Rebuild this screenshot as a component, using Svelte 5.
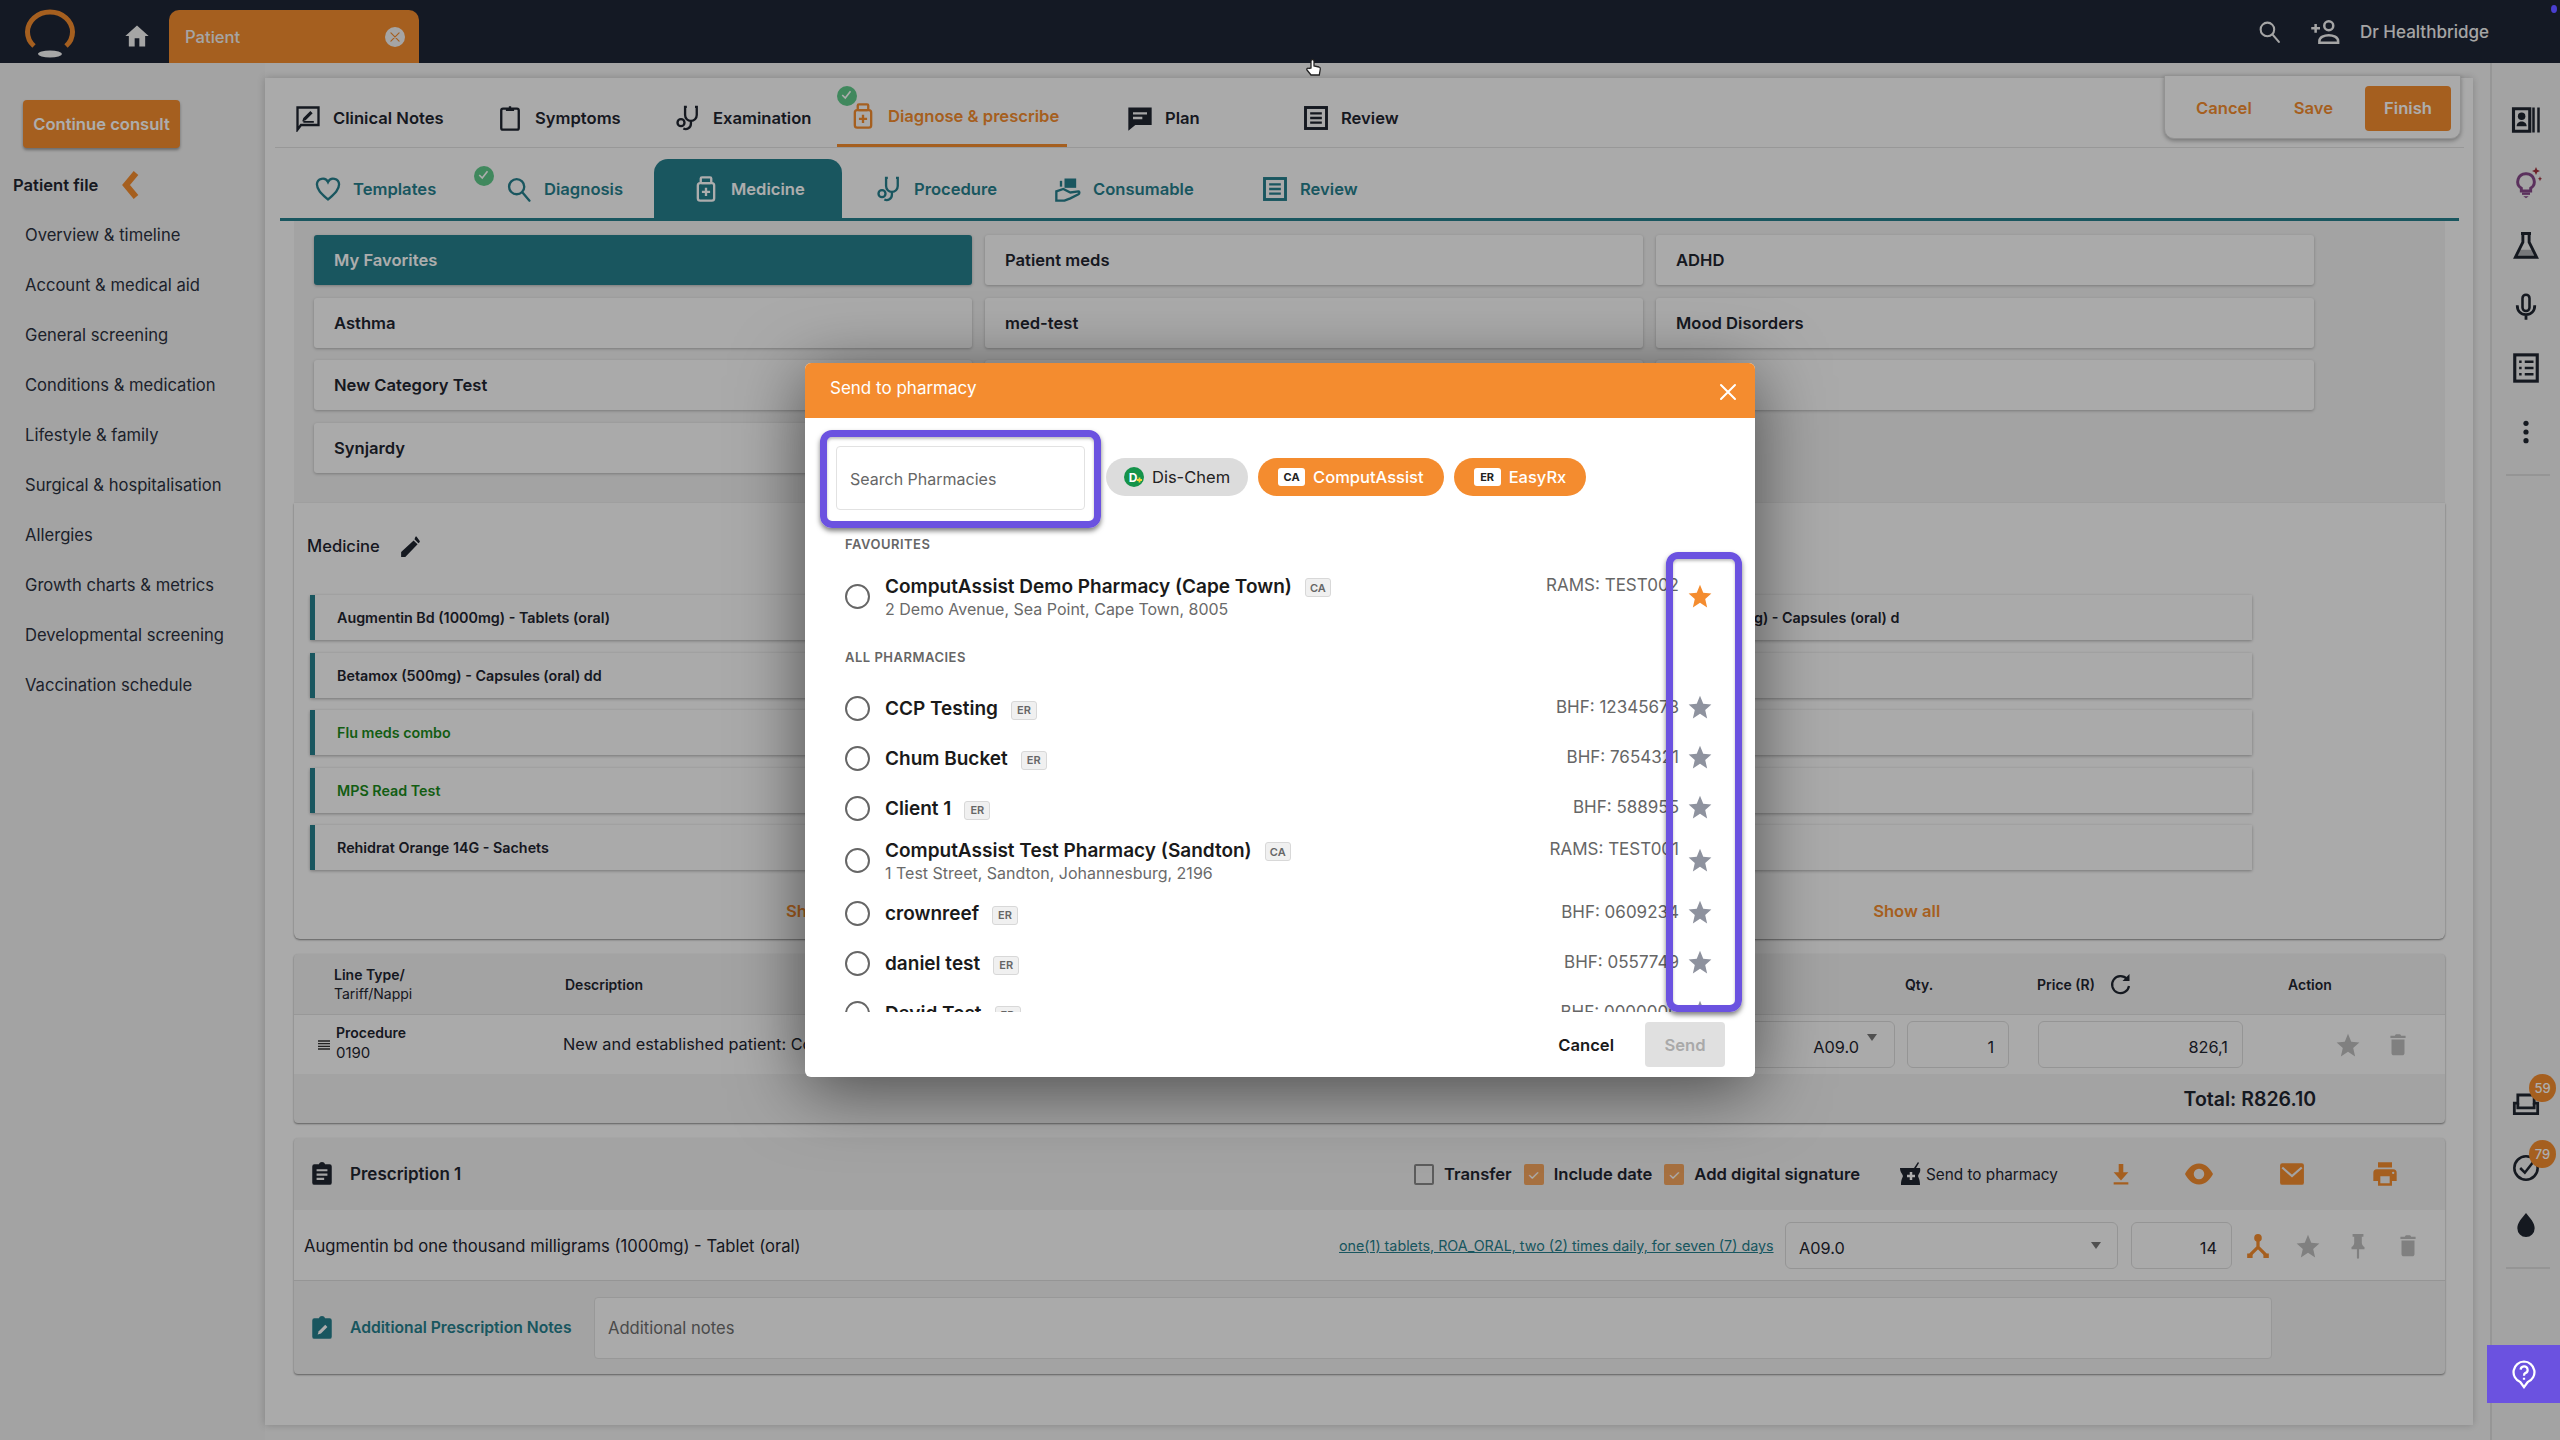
<script>
  const icons = {
    home: '<path fill="currentColor" d="M10 21v-7h4v7h5v-9h3L12 3 2 12h3v9z"/>',
    close: '<path fill="none" stroke="currentColor" stroke-width="2" stroke-linecap="round" d="M5 5l14 14M19 5L5 19"/>',
    search: '<circle cx="10" cy="10" r="6.5" fill="none" stroke="currentColor" stroke-width="2"/><path d="M15 15l6 7" stroke="currentColor" stroke-width="2" stroke-linecap="round"/>',
    adduser: '<circle cx="15" cy="7" r="3.6" fill="none" stroke="currentColor" stroke-width="2"/><path d="M7.5 20.5v-1.3c0-3 4-4.7 7.5-4.7s7.5 1.7 7.5 4.7v1.3z" fill="none" stroke="currentColor" stroke-width="2"/><path d="M1 9h7M4.500 5.500v7" stroke="currentColor" stroke-width="2"/>',
    notes: '<path d="M3 3h18v15H6l-3 4z" fill="none" stroke="currentColor" stroke-width="2"/><path d="M7 15l1-3 6-6 2 2-6 6zM8 16h9v-1.500H8z" fill="currentColor"/>',
    clipboard: '<path d="M6 4h12a1.500 1.500 0 0 1 1.500 1.500v15A1.500 1.500 0 0 1 18 22H6a1.500 1.500 0 0 1-1.500-1.500v-15A1.500 1.500 0 0 1 6 4z" fill="none" stroke="currentColor" stroke-width="2"/><path d="M8.500 6V3.500H11V2h2v1.500h2.500V6z" fill="currentColor"/>',
    steth: '<path d="M11 2.500H9.500v7a5 5 0 0 0 10 0v-7H18" fill="none" stroke="currentColor" stroke-width="2"/><path d="M14.500 14.500v2.500a4.500 4.500 0 0 1-6.500 4" fill="none" stroke="currentColor" stroke-width="2"/><circle cx="6" cy="16" r="3" fill="none" stroke="currentColor" stroke-width="2"/>',
    bottle: '<rect x="5" y="7" width="14" height="15" rx="2" fill="none" stroke="currentColor" stroke-width="2"/><rect x="7.500" y="2" width="9" height="5" rx="1" fill="none" stroke="currentColor" stroke-width="2"/><path d="M12 11v7M8.500 14.500h7" stroke="currentColor" stroke-width="2"/>',
    chat: '<path d="M2 3h20v15H8l-6 5z" fill="currentColor"/><path d="M6 8h12M6 12h8" stroke="#f4f4f4" stroke-width="2"/>',
    review: '<rect x="3" y="3" width="18" height="18" fill="none" stroke="currentColor" stroke-width="2.500"/><path d="M7 8h10M7 12h10M7 16h10" stroke="currentColor" stroke-width="2"/>',
    heart: '<path d="M12 21C7 16.500 2.500 13 2.500 8A5 5 0 0 1 12 6a5 5 0 0 1 9.500 2c0 5-4.500 8.500-9.500 13z" fill="none" stroke="currentColor" stroke-width="2"/>',
    consumable: '<path d="M2 22v-8l6-2 6 3 7-1c1 0 1 2 0 2.500L14 20l-5 2z" fill="none" stroke="currentColor" stroke-width="2"/><rect x="9" y="3" width="10" height="8" fill="currentColor"/><path d="M5 5h2v5H5z" fill="currentColor"/>',
    star: '<path fill="currentColor" d="M12 1.500l3 7.600 7.500.600-5.700 5 1.800 7.800L12 18.300l-6.600 4.200 1.800-7.800-5.700-5 7.500-.600z"/>',
    trash: '<path fill="currentColor" d="M6 19.500c0 1.100.9 2 2 2h8c1.100 0 2-.9 2-2V7H6zM19 3.500h-4l-1-1.500h-4L9 3.500H5v2h14z"/>',
    pencil: '<path fill="currentColor" d="M3 17.250V22h4L18.800 9.900 15 6.200zM20.700 7.900c.4-.4.4-1 0-1.400l-2.600-3.700c-.4-.4-1-.4-1.400 0L15.800 5l3.800 3.800z"/>',
    lines: '<path d="M3 6h18M3 10h18M3 14h18M3 18h18" stroke="currentColor" stroke-width="2"/>',
    refresh: '<path d="M18 7A8.500 8.500 0 1 0 20 14" fill="none" stroke="currentColor" stroke-width="2.200"/><path d="M20.500 2v7h-7z" fill="currentColor"/>',
    assignment: '<path fill="currentColor" d="M19 3h-4.200C14.400 1.800 13.300 1 12 1s-2.400.8-2.800 2H5a2 2 0 0 0-2 2v15a2 2 0 0 0 2 2h14a2 2 0 0 0 2-2V5a2 2 0 0 0-2-2z"/><path d="M7 8.500h10M7 12.500h10M7 16.500h7" stroke="#f0f0f0" stroke-width="2"/>',
    assignEdit: '<path fill="currentColor" d="M19 3h-4.200C14.400 1.800 13.300 1 12 1s-2.400.8-2.800 2H5a2 2 0 0 0-2 2v15a2 2 0 0 0 2 2h14a2 2 0 0 0 2-2V5a2 2 0 0 0-2-2z"/><path d="M8 18l1-3 6-6 2 2-6 6z" fill="#fff"/>',
    mortar: '<path fill="currentColor" d="M1 6h14l4-6 1 1-3 5h4c1 4-1 5-2 8 1 3 2 4 2 9H2c0-5 1-6 2-9C3 11 1 10 1 6z"/><path d="M12 10v8M8 14h8" stroke="#fff" stroke-width="2.500"/>',
    download: '<path fill="currentColor" d="M9.500 1h5v9H20l-8 9-8-9h5.500zM4 21h16v2.500H4z"/>',
    eye: '<path fill-rule="evenodd" fill="currentColor" d="M12 3c6 0 10 5 12 9-2 4-6 9-12 9S2 16 0 12c2-4 6-9 12-9zm0 4.500a4.500 4.500 0 1 0 0 9 4.500 4.500 0 0 0 0-9z"/>',
    mail: '<path fill="currentColor" d="M3 2h18a2 2 0 0 1 2 2v16a2 2 0 0 1-2 2H3a2 2 0 0 1-2-2V4a2 2 0 0 1 2-2z"/><path d="M3 6l9 8 9-8" fill="none" stroke="#f0f0f0" stroke-width="2"/>',
    print: '<path fill="currentColor" d="M19 8H5a3 3 0 0 0-3 3v7h4v4h12v-4h4v-7a3 3 0 0 0-3-3zm-3 12H8v-6h8zm3-8a1 1 0 1 1 0-2 1 1 0 0 1 0 2zM18 2H6v4.500h12z"/>',
    share: '<circle cx="12" cy="4.500" r="3.500" fill="currentColor"/><path d="M12 7v7M12 13l-7 7M12 13l7 7" stroke="currentColor" stroke-width="3"/><path d="M2 19h5v4H2zM17 19h5v4h-5z" fill="currentColor"/>',
    pin: '<path fill="currentColor" d="M15.500 9V3.500h1.500V1H7v2.500h1.500V9C8.500 11 7 12.500 6 13v2h5v8l1 1 1-1v-8h5v-2c-1-.5-2.500-2-2.500-4z"/>',
    patient: '<path d="M2 3h13v18H2z" fill="none" stroke="currentColor" stroke-width="2.500"/><circle cx="8.500" cy="9" r="3" fill="currentColor"/><path d="M4.500 17c0-5 8-5 8 0z" fill="currentColor"/><path d="M18 2v20M22 2v20" stroke="currentColor" stroke-width="2"/>',
    flask: '<path d="M8 2h8M9.500 2v7L3.500 21h17l-6-12V2" fill="none" stroke="currentColor" stroke-width="2.300"/><path d="M7 15h10l2.500 6h-15z" fill="currentColor" opacity=".3"/>',
    mic: '<rect x="9" y="1.500" width="6" height="14" rx="3" fill="none" stroke="currentColor" stroke-width="2.200"/><path d="M4.500 10.500c0 5 3 8 7.500 8s7.500-3 7.500-8M12 18v5" fill="none" stroke="currentColor" stroke-width="2.400"/>',
    list: '<rect x="3" y="1.500" width="18" height="21" fill="none" stroke="currentColor" stroke-width="2.500"/><path d="M6.500 7h2M11 7h7M6.500 12h2M11 12h7M6.500 17h2M11 17h7" stroke="currentColor" stroke-width="2"/>',
    dots: '<circle cx="12" cy="4" r="2.400" fill="currentColor"/><circle cx="12" cy="12" r="2.400" fill="currentColor"/><circle cx="12" cy="20" r="2.400" fill="currentColor"/>',
    inbox: '<path d="M2 13h3V6h14v7h3v9H2z" fill="none" stroke="currentColor" stroke-width="2.400"/><path d="M5 13v4h14v-4" fill="none" stroke="currentColor" stroke-width="2.400"/>',
    checkc: '<circle cx="12" cy="12" r="10" fill="none" stroke="currentColor" stroke-width="2.200"/><path d="M7 12l4 4 7-9" fill="none" stroke="currentColor" stroke-width="2.200"/>',
    drop: '<path fill="currentColor" d="M12 1c4 5 8 9 8 14a8 8 0 0 1-16 0C4 10 8 6 12 1z"/>',
    help: '<path d="M12 2a8.500 8.500 0 0 1 3 16.400L12 22.500l-3-4.100A8.500 8.500 0 0 1 12 2z" fill="none" stroke="currentColor" stroke-width="1.800"/><path d="M9.300 8.500A2.800 2.800 0 1 1 13 11.300c-.8.400-1 1-1 2M12 15v1.500" fill="none" stroke="currentColor" stroke-width="1.800"/>',
    bulb: '<path d="M12 5a6 6 0 0 0-3.500 11v2h7v-2A6 6 0 0 0 12 5z" fill="none" stroke="#86498a" stroke-width="2.200"/><path d="M9 20h6" stroke="#86498a" stroke-width="1.800"/><path d="M10 22h4l-2 1.500z" fill="#86498a"/><path d="M19.500 0l.9 2.100 2.100.9-2.100.9-.9 2.100-.9-2.100-2.100-.9 2.100-.9zM22.500 7l.5 1.300 1 .5-1 .5-.5 1.300-.5-1.300-1-.5 1-.5z" fill="#a3333f"/>'
  };

  const topTabs = [
    { label: 'Clinical Notes', icon: 'notes', w: 202 },
    { label: 'Symptoms', icon: 'clipboard', w: 178 },
    { label: 'Examination', icon: 'steth', w: 175 },
    { label: 'Diagnose & prescribe', icon: 'bottle', w: 230, active: true, done: true },
    { label: 'Plan', icon: 'chat', w: 176 },
    { label: 'Review', icon: 'review', w: 120 }
  ];
  const subTabs = [
    { label: 'Templates', icon: 'heart', w: 191 },
    { label: 'Diagnosis', icon: 'search', w: 149, done: true },
    { label: 'Medicine', icon: 'bottle', w: 188, active: true },
    { label: 'Procedure', icon: 'steth', w: 179 },
    { label: 'Consumable', icon: 'consumable', w: 207 },
    { label: 'Review', icon: 'review', w: 100 }
  ];
  const sideLinks = ['Overview & timeline', 'Account & medical aid', 'General screening', 'Conditions & medication', 'Lifestyle & family', 'Surgical & hospitalisation', 'Allergies', 'Growth charts & metrics', 'Developmental screening', 'Vaccination schedule'];
  const categories = ['My Favorites', 'Patient meds', 'ADHD', 'Asthma', 'med-test', 'Mood Disorders', 'New Category Test', 'Anxiety', 'Cardiac', 'Synjardy'];
  const meds = [
    { name: 'Augmentin Bd (1000mg) - Tablets (oral)', other: 'Amoxil (500mg) - Capsules (oral) d' },
    { name: 'Betamox (500mg) - Capsules (oral) dd', other: '' },
    { name: 'Flu meds combo', other: '', combo: true },
    { name: 'MPS Read Test', other: '', combo: true },
    { name: 'Rehidrat Orange 14G - Sachets', other: '' }
  ];
  const favourites = [
    { name: 'ComputAssist Demo Pharmacy (Cape Town)', tag: 'CA', addr: '2 Demo Avenue, Sea Point, Cape Town, 8005', code: 'RAMS: TEST002', fav: true }
  ];
  const pharmacies = [
    { name: 'CCP Testing', tag: 'ER', code: 'BHF: 12345678' },
    { name: 'Chum Bucket', tag: 'ER', code: 'BHF: 7654321' },
    { name: 'Client 1', tag: 'ER', code: 'BHF: 588955' },
    { name: 'ComputAssist Test Pharmacy (Sandton)', tag: 'CA', addr: '1 Test Street, Sandton, Johannesburg, 2196', code: 'RAMS: TEST001' },
    { name: 'crownreef', tag: 'ER', code: 'BHF: 0609234' },
    { name: 'daniel test', tag: 'ER', code: 'BHF: 0557749' },
    { name: 'David Test', tag: 'ER', code: 'BHF: 0000000' }
  ];
</script>

{#snippet icon(name, size = 24, cls = '')}
  <svg class="ico {cls}" width={size} height={size} viewBox="0 0 24 24">{@html icons[name]}</svg>
{/snippet}

{#snippet pharmacy(p)}
  <div class="ph-row" class:two={p.addr}>
    <span class="radio"></span>
    <div class="ph-main">
      <div class="ph-name">{p.name}<span class="tag">{p.tag}</span></div>
      {#if p.addr}<div class="ph-addr">{p.addr}</div>{/if}
    </div>
    <div class="ph-code">{p.code}</div>
    <span class="ph-star" class:fav={p.fav}>{@render icon('star', 26)}</span>
  </div>
{/snippet}

<div class="page">
  <header class="topbar">
    <svg class="logo" width="50" height="50" viewBox="0 0 50 50">
      <path d="M9 38A22.500 20 0 1 1 41 38" fill="none" stroke-width="5"/>
      <ellipse cx="25" cy="46" rx="12" ry="3.500"/>
    </svg>
    <span class="home">{@render icon('home', 28)}</span>
    <div class="ptab">
      <span>Patient</span>
      <span class="ptab-x">{@render icon('close', 14)}</span>
    </div>
    <div class="top-right">
      {@render icon('search', 25)}
      {@render icon('adduser', 30)}
      <span class="user">Dr Healthbridge</span>
    </div>
  </header>

  <div class="body">
    <aside class="side">
      <button class="continue">Continue consult</button>
      <div class="pfile">
        <b>Patient file</b>
        <svg width="18" height="28" viewBox="0 0 18 28"><path d="M14 2L4 14l10 12" fill="none" stroke="#f48c2f" stroke-width="6"/></svg>
      </div>
      <nav>
        {#each sideLinks as l}<div class="slink">{l}</div>{/each}
      </nav>
    </aside>

    <main class="main">
      <div class="actions">
        <span class="act">Cancel</span>
        <span class="act">Save</span>
        <span class="finish">Finish</span>
      </div>

      <div class="tabs1">
        {#each topTabs as t}
          <div class="tab1" class:on={t.active} style:width="{t.w}px">
            {#if t.done}<span class="done">{@render icon('checkc', 18)}</span>{/if}
            {@render icon(t.icon, 28)}
            <span>{t.label}</span>
          </div>
        {/each}
      </div>

      <div class="tabs2">
        {#each subTabs as t}
          <div class="tab2" class:on={t.active} style:width="{t.w}px">
            {#if t.done}<span class="done">{@render icon('checkc', 18)}</span>{/if}
            {@render icon(t.icon, 28)}
            <span>{t.label}</span>
          </div>
        {/each}
      </div>

      <div class="content">
        <div class="cats">
          {#each categories as c, i}
            <div class="cat" class:sel={i === 0}>{c}</div>
          {/each}
        </div>

        <section class="medcard">
          <div class="medhead"><span>Medicine</span>{@render icon('pencil', 25)}</div>
          <div class="medgrid">
            {#each meds as m}
              <div class="med" class:combo={m.combo}>{m.name}</div>
              <div class="med other">{m.other}</div>
            {/each}
          </div>
          <div class="showrow"><span>Show all</span><span>Show all</span></div>
        </section>

        <section class="card tablecard">
          <div class="thead">
            <div class="c-type"><b>Line Type/</b><br />Tariff/Nappi</div>
            <b class="c-desc">Description</b>
            <b class="c-qty">Qty.</b>
            <b class="c-price">Price (R)</b>
            <span class="c-ref">{@render icon('refresh', 24)}</span>
            <b class="c-act">Action</b>
          </div>
          <div class="trow">
            <span class="drag">{@render icon('lines', 16)}</span>
            <div class="c-proc"><b>Procedure</b><br />0190</div>
            <div class="c-d2">New and established patient: Consultation</div>
            <div class="box b-icd">A09.0<i class="caret small"></i></div>
            <div class="box b-qty">1</div>
            <div class="box b-price">826,1</div>
            <span class="g-star">{@render icon('star', 26)}</span>
            <span class="g-trash">{@render icon('trash', 26)}</span>
          </div>
          <div class="total"><b>Total: R826.10</b></div>
        </section>

        <section class="card rxcard">
          <div class="rxhead">
            {@render icon('assignment', 26)}
            <b class="rxtitle">Prescription 1</b>
            <div class="rxopts">
              <span class="chk"></span><b>Transfer</b>
              <span class="chk on">✓</span><b>Include date</b>
              <span class="chk on">✓</span><b>Add digital signature</b>
            </div>
            <div class="rxsend">{@render icon('mortar', 24)}<span>Send to pharmacy</span></div>
            <span class="rx-dl">{@render icon('download', 22)}</span>
            <span class="rx-eye">{@render icon('eye', 28)}</span>
            <span class="rx-mail">{@render icon('mail', 26)}</span>
            <span class="rx-print">{@render icon('print', 28)}</span>
          </div>
          <div class="rxrow">
            <span class="rxdrug">Augmentin bd one thousand milligrams (1000mg) - Tablet (oral)</span>
            <a class="rxlink" href="#top">one(1) tablets, ROA_ORAL, two (2) times daily, for seven (7) days</a>
            <div class="box r-icd">A09.0<i class="caret"></i></div>
            <div class="box r-qty">14</div>
            <span class="r-share">{@render icon('share', 26)}</span>
            <span class="g-star r-i">{@render icon('star', 26)}</span>
            <span class="g-pin r-i">{@render icon('pin', 26)}</span>
            <span class="g-trash r-i">{@render icon('trash', 26)}</span>
          </div>
          <div class="rxnotes">
            {@render icon('assignEdit', 26)}
            <b class="notelabel">Additional Prescription Notes</b>
            <div class="noteinput">Additional notes</div>
          </div>
        </section>
      </div>
    </main>

    <aside class="rail">
      <div class="rail-top">
        {@render icon('patient', 30)}
        {@render icon('bulb', 32)}
        {@render icon('flask', 30)}
        {@render icon('mic', 28)}
        {@render icon('list', 30)}
        <span class="rail-dots">{@render icon('dots', 26)}</span>
      </div>
      <hr />
      <div class="rail-low">
        <div class="badged">{@render icon('inbox', 28)}<span class="badge">59</span></div>
        <div class="badged">{@render icon('checkc', 28)}<span class="badge">79</span></div>
        <span class="rail-drop">{@render icon('drop', 26)}</span>
      </div>
      <hr />
      <div class="helpbox">{@render icon('help', 30)}</div>
    </aside>
  </div>

  <div class="backdrop"></div>

  <section class="modal">
    <header class="m-head">
      <span>Send to pharmacy</span>
      <span class="m-x">{@render icon('close', 24)}</span>
    </header>
    <div class="m-search">
      <div class="m-input">Search Pharmacies</div>
      <span class="chip grey">
        <svg width="20" height="20" viewBox="0 0 20 20"><circle cx="10" cy="10" r="10" fill="#14934a"/><text x="9" y="14.500" text-anchor="middle" font-size="12" font-weight="700" fill="#fff">D</text><path d="M13 13h5M15.500 10.500v5" stroke="#f2d43a" stroke-width="1.800"/></svg>
        Dis-Chem
      </span>
      <span class="chip"><i>CA</i>ComputAssist</span>
      <span class="chip"><i>ER</i>EasyRx</span>
    </div>
    <div class="m-list">
      <div class="m-label first">FAVOURITES</div>
      {#each favourites as p}{@render pharmacy(p)}{/each}
      <div class="m-label">ALL PHARMACIES</div>
      {#each pharmacies as p}{@render pharmacy(p)}{/each}
    </div>
    <footer class="m-foot">
      <span class="m-cancel">Cancel</span>
      <span class="m-send">Send</span>
    </footer>
    <div class="hl hl-search"></div>
    <div class="hl hl-stars"></div>
  </section>

  <svg class="cursor" width="18" height="20" viewBox="0 0 18 20"><path d="M6 10V3a1.500 1.500 0 0 1 3 0v5l5 1c1 .3 1.500 1 1.300 2l-1 6H6L2 12c-.8-1 .5-2.500 2-1.500z" fill="#fff" stroke="#222" stroke-width="1.300"/></svg>
  <span class="bluedot"></span>
</div>

<style>
  :global(body) { margin: 0; }
  * { box-sizing: border-box; }

  .page {
    position: relative;
    width: 2560px;
    height: 1440px;
    overflow: hidden;
    background: #f4f4f4;
    font-family: Inter, "Noto Sans", sans-serif;
    font-size: 16.6px;
    color: #1f2530;
    display: flex;
    flex-direction: column;
  }
  .ico { display: block; flex: none; }
  b { font-weight: 600; }

  /* top bar */
  .topbar {
    height: 63px;
    background: #1e2536;
    display: flex;
    align-items: flex-end;
    color: #f4f4f4;
    padding-left: 25px;
    flex: none;
  }
  .logo { margin-bottom: 5px; }
  .logo path { stroke: #f48c2f; }
  .logo ellipse { fill: #f6f6f6; }
  .home { margin: 0 18px 13px 48px; }
  .ptab {
    width: 250px;
    height: 53px;
    background: #f48c2f;
    border-radius: 10px 10px 0 0;
    display: flex;
    align-items: center;
    justify-content: space-between;
    padding: 0 14px 0 16px;
    font-weight: 500;
  }
  .ptab-x {
    width: 20px; height: 20px; border-radius: 50%;
    background: #f4f4f4; color: #f48c2f;
    display: flex; align-items: center; justify-content: center;
  }
  .top-right {
    margin-left: auto;
    align-self: center;
    display: flex;
    align-items: center;
    gap: 28px;
    padding-right: 71px;
  }
  .user { font-weight: 500; margin-left: -8px; font-size: 17px; }

  .body { flex: 1; display: flex; min-height: 0; }

  /* sidebar */
  .side { width: 265px; flex: none; padding-top: 37px; background: #f0f0f0; }
  .continue {
    display: block;
    margin-left: 23px;
    width: 157px; height: 48px;
    border: 0; border-radius: 4px;
    background: #f48c2f;
    color: #fff;
    font: 600 16.600px Inter, sans-serif;
    box-shadow: 0 2px 3px rgba(0,0,0,.35);
  }
  .pfile { display: flex; align-items: center; gap: 24px; padding-left: 13px; margin-top: 24px; height: 26px; }
  nav { padding: 12px 0 0 25px; }
  .slink { height: 50px; line-height: 50px; color: #2c3240; white-space: nowrap; }

  /* main panel */
  .main {
    width: 2208px;
    margin: 15px 0;
    height: 1347px;
    flex: none;
    background: #fbfbfb;
    position: relative;
    box-shadow: 0 0 8px rgba(0,0,0,.2);
  }
  .actions {
    position: absolute;
    right: 12px; top: -3px;
    width: 297px; height: 64px;
    background: #fbfbfb;
    border: 1px solid #d8d8d8;
    border-radius: 0 0 10px 10px;
    box-shadow: 0 2px 4px rgba(0,0,0,.3);
    display: flex;
    align-items: center;
    padding: 2px 9px 0 31px;
  }
  .act { color: #f48c2f; font-weight: 600; margin-right: 42px; }
  .finish {
    margin-left: -10px;
    width: 87px; height: 45px; border-radius: 4px;
    background: #f48c2f; color: #fff; font-weight: 600;
    display: flex; align-items: center; justify-content: center;
  }

  .tabs1 { height: 70px; margin: 0 9px 0 10px; padding-left: 19px; border-bottom: 1px solid #e0e0e0; display: flex; }
  .tab1 {
    position: relative;
    display: flex; align-items: center; gap: 11px;
    font-weight: 600;
    white-space: nowrap;
    color: #1f2530;
    padding-top: 10px;
  }
  .tab1.on { color: #f48c2f; border-bottom: 3px solid #f48c2f; padding-left: 12px; margin: 0 59px 0 -12px; }
  .done { position: absolute; left: 0; top: 8px; width: 20px; height: 20px; border-radius: 50%; background: #5fc98a; color: #fff; }
  .done :global(circle) { display: none; }
  .tab2 .done { left: -31px; top: 7px; }
  .tabs2 { height: 73px; margin: 0 14px 0 15px; padding: 11px 0 0 34px; border-bottom: 3px solid #267f8d; display: flex; }
  .tab2 {
    position: relative;
    display: flex; align-items: center; gap: 11px;
    color: #267f8d; font-weight: 600;
    white-space: nowrap;
    padding-top: 1px;
  }
  .tab2.on { background: #267f8d; color: #fff; border-radius: 14px 14px 0 0; padding-left: 38px; margin-right: 33px; }

  .content { margin: 0 28px 0 29px; }
  .cats {
    background: #f0f0f0;
    height: 282px;
    padding: 14px 0 0 20px;
    display: grid;
    grid-template-columns: repeat(3, 658px);
    grid-auto-rows: 50px;
    gap: 12.500px 13px;
    align-content: start;
  }
  .cat {
    background: #fbfbfb;
    border-radius: 3px;
    box-shadow: 0 1px 3px rgba(0,0,0,.25);
    display: flex; align-items: center;
    padding-left: 20px;
    font-weight: 600;
  }
  .cat.sel { background: #267f8d; color: #fff; }

  .medcard {
    height: 436px;
    background: #fbfbfb;
    border-radius: 0 0 6px 6px;
    box-shadow: 0 1px 2px rgba(0,0,0,.45);
    padding: 0 0 0 13px;
  }
  .medhead { height: 92px; padding-bottom: 6px; display: flex; align-items: center; gap: 18px; font-weight: 500; }
  .medgrid {
    display: grid;
    grid-template-columns: 1019px 653px;
    grid-auto-rows: 45px;
    column-gap: 270px;
    row-gap: 12.500px;
    margin-left: 3px;
  }
  .med {
    border-left: 5px solid #267f8d;
    background: #fbfbfb;
    box-shadow: 0 1px 3px rgba(0,0,0,.3);
    padding-left: 22px;
    display: flex; align-items: center;
    font-size: 14.300px; font-weight: 600;
  }
  .med.other { padding-left: 53px; }
  .med.combo { color: #1b8a1b; }
  .showrow { display: flex; height: 41px; align-items: center; color: #f48c2f; font-weight: 600; padding-left: 479px; margin-top: 20px; }
  .showrow span:last-child { margin-left: 1020px; }

  .card { border-radius: 4px; background: #f0f0f0; box-shadow: 0 1px 2px rgba(0,0,0,.45); }
  .tablecard { margin-top: 15px; height: 169px; font-size: 14px; }
  .thead { height: 61px; border-bottom: 1px solid #e0e0e0; display: flex; align-items: center; position: relative; line-height: 19px; }
  .c-type { margin-left: 40px; width: 231px; }
  .c-desc { width: 1340px; }
  .c-qty { width: 132px; }
  .c-price { width: 72px; }
  .c-ref { width: 179px; }
  .trow { height: 59px; background: #fbfbfb; display: flex; align-items: center; }
  .drag { margin-left: 22px; width: 20px; color: #333; }
  .c-proc { width: 227px; line-height: 20px; font-size: 15px; margin-top: -3px; }
  .c-proc b { font-size: 14px; }
  .c-d2 { width: 1232px; font-size: 16.300px; white-space: nowrap; margin-top: -2px; }
  .box {
    height: 47px;
    border: 1px solid #dcdcdc;
    border-radius: 6px;
    display: flex; align-items: center;
    justify-content: flex-end;
    padding-right: 14px;
    padding-top: 5px;
    font-size: 16.300px;
    background: #fbfbfb;
    flex: none;
  }
  .b-icd { width: 236px; margin-left: -136px; padding-right: 35px; position: relative; }
  .b-qty { width: 102px; margin-left: 12px; }
  .b-price { width: 205px; margin-left: 29px; }
  .caret { position: absolute; right: 17px; top: 20px; width: 0; height: 0; border: 5px solid transparent; border-top: 7px solid #777; border-bottom: 0; }
  .caret.small { top: 12px; }
  .g-star { color: #bdbdbd; margin-left: 92px; }
  .g-trash { color: #bdbdbd; margin-left: 24px; }
  .g-pin { color: #bdbdbd; }
  .total { height: 49px; display: flex; align-items: center; justify-content: flex-end; padding-right: 129px; font-size: 19.500px; }

  .rxcard { margin-top: 15px; height: 236px; }
  .rxhead { height: 72px; display: flex; align-items: center; padding-left: 15px; }
  .rxtitle { margin-left: 15px; width: 1064px; font-size: 17px; }
  .rxopts { display: flex; align-items: center; width: 485px; white-space: nowrap; }
  .rxopts b { margin: 0 12px 0 10px; }
  .chk { width: 20px; height: 21px; flex: none; border: 2px solid #888; border-radius: 2px; display: inline-flex; align-items: center; justify-content: center; color: #fff; font-size: 14px; }
  .chk.on { background: #f5a65f; border-color: #f5a65f; }
  .rxsend { display: flex; align-items: center; gap: 3px; width: 211px; font-size: 15.300px; white-space: nowrap; }
  .rx-dl, .rx-eye, .rx-mail, .rx-print { color: #f48c2f; }
  .rx-eye { margin-left: 53px; }
  .rx-mail { margin-left: 66px; }
  .rx-print { margin-left: 66px; }
  .rxrow { height: 71px; background: #fbfbfb; border-bottom: 1px solid #dcdcdc; display: flex; align-items: center; padding: 1px 0 0 10px; }
  .rxdrug { width: 1035px; white-space: nowrap; }
  .rxlink { width: 446px; color: #267f8d; font-size: 14.300px; white-space: nowrap; }
  .r-icd { width: 333px; justify-content: flex-start; padding-left: 13px; position: relative; }
  .r-icd .caret { right: 16px; top: 19px; }
  .r-qty { width: 101px; margin-left: 13px; }
  .r-share { color: #f48c2f; margin-left: 13px; }
  .r-i { margin-left: 24px; }
  .rxnotes { height: 93px; display: flex; align-items: center; padding-left: 15px; }
  .rxnotes > :global(svg) { color: #267f8d; }
  .notelabel { color: #267f8d; margin-left: 15px; width: 244px; font-size: 15.700px; white-space: nowrap; }
  .noteinput { width: 1678px; height: 62px; background: #fbfbfb; border: 1px solid #e0e0e0; border-radius: 4px; display: flex; align-items: center; padding-left: 13px; color: #6e6e6e; }

  /* right rail */
  .rail { flex: 1; margin-left: 17px; border-left: 2px solid #dedede; background: #f0f0f0; position: relative; }
  .rail-top { display: flex; flex-direction: column; align-items: center; gap: 32px; padding: 42px 0 0; }
  .rail-dots { margin-top: 4px; }
  .rail hr { width: 44px; margin: 29px auto 0 14px; border: 0; border-top: 2px solid #dcdcdc; }
  .rail-low { display: flex; flex-direction: column; align-items: center; gap: 38px; padding-top: 612px; }
  .rail-drop { margin-top: -8px; }
  .badged { position: relative; }
  .badge {
    position: absolute; left: 17px; top: -14px;
    width: 27px; height: 28px; border-radius: 50%;
    background: #f48c2f; color: #fff;
    display: flex; align-items: center; justify-content: center;
    font-size: 13px; font-weight: 500;
  }
  .helpbox {
    position: absolute; left: -5px; right: 0; bottom: 37px; height: 58px;
    background: #6b52e0; color: #fff;
    display: flex; align-items: center; justify-content: center;
    z-index: 3;
  }

  /* backdrop and modal */
  .backdrop { position: absolute; inset: 0; background: rgba(0,0,0,.32); }
  .modal {
    position: absolute;
    left: 805px; top: 363px;
    width: 950px; height: 714px;
    background: #fff;
    border-radius: 6px;
    box-shadow: 0 12px 70px rgba(0,0,0,.55);
    display: flex; flex-direction: column;
  }
  .m-head {
    height: 55px; flex: none;
    background: #f48c2f; color: #fff;
    border-radius: 6px 6px 0 0;
    display: flex; align-items: center; justify-content: space-between;
    padding: 0 15px 6px 25px;
    font-size: 17px;
  }
  .m-x { margin-top: 9px; }
  .m-search { height: 110px; flex: none; display: flex; align-items: center; padding: 10px 0 0 31px; gap: 10px; }
  .m-input { width: 249px; height: 64px; border: 1px solid #e2e2e2; border-radius: 4px; display: flex; align-items: center; padding: 2px 0 0 13px; color: #666; font-size: 16px; margin-right: 11px; }
  .chip { height: 38px; border-radius: 19px; background: #f48c2f; color: #fff; display: flex; align-items: center; gap: 8px; padding: 0 20px; font-weight: 500; font-size: 16.500px; margin-top: -3px; }
  .chip.grey { background: #dcdcdc; color: #222; font-weight: 400; padding: 0 18px; }
  .chip i { font-style: normal; background: #fff; color: #222; font-size: 11px; font-weight: 700; border-radius: 3px; width: 27px; height: 18px; display: flex; align-items: center; justify-content: center; }

  .m-list { height: 484px; flex: none; overflow: hidden; padding-left: 40px; }
  .m-label { height: 59px; padding-top: 25px; font-size: 13px; font-weight: 600; color: #666; letter-spacing: .5px; }
  .m-label.first { height: 41px; padding-top: 8px; }
  .ph-row { height: 50px; display: flex; align-items: center; position: relative; }
  .ph-row.two { height: 55px; }
  .radio { width: 25px; height: 25px; border: 2px solid #666; border-radius: 50%; flex: none; }
  .ph-main { margin-left: 15px; flex: 1; padding-top: 1px; }
  .ph-row.two .ph-main { padding-top: 0; }
  .ph-name { font-size: 19px; font-weight: 600; color: #1a1a1a; display: flex; align-items: center; white-space: nowrap; }
  .tag { margin-left: 13px; margin-top: 3px; width: 26px; height: 19px; border: 1px solid #d8d8d8; border-radius: 3px; background: #f0f0f0; color: #666; font-size: 11px; font-weight: 600; display: flex; align-items: center; justify-content: center; }
  .ph-addr { font-size: 16px; color: #6a6a6a; margin-top: 1px; }
  .ph-code { position: absolute; right: 76px; top: 14px; font-size: 17px; color: #666; white-space: nowrap; }
  .ph-row.two .ph-code { top: 6px; }
  .ph-star { position: absolute; right: 42px; top: 50%; margin-top: -14px; color: #8e929e; }
  .ph-star.fav { color: #f48c2f; }
  .m-foot { flex: 1; display: flex; align-items: center; justify-content: flex-end; padding: 0 30px 0 0; gap: 31px; }
  .m-cancel { font-weight: 600; color: #1a1a1a; }
  .m-send { width: 80px; height: 45px; background: #e0e0e0; color: #a9a9a9; font-weight: 600; border-radius: 4px; display: flex; align-items: center; justify-content: center; }

  .hl { position: absolute; border: 7px solid #6b52e0; border-radius: 12px; box-shadow: 0 3px 5px rgba(0,0,0,.5), inset 0 2px 3px rgba(0,0,0,.25); pointer-events: none; }
  .hl-search { left: 15px; top: 67px; width: 281px; height: 98px; }
  .hl-stars { left: 861px; top: 189px; width: 76px; height: 460px; }

  .cursor { position: absolute; left: 1305px; top: 58px; }
  .bluedot { position: absolute; left: 2551px; top: 5px; width: 6px; height: 8px; border-radius: 50%; background: #4a3fd0; }
</style>
